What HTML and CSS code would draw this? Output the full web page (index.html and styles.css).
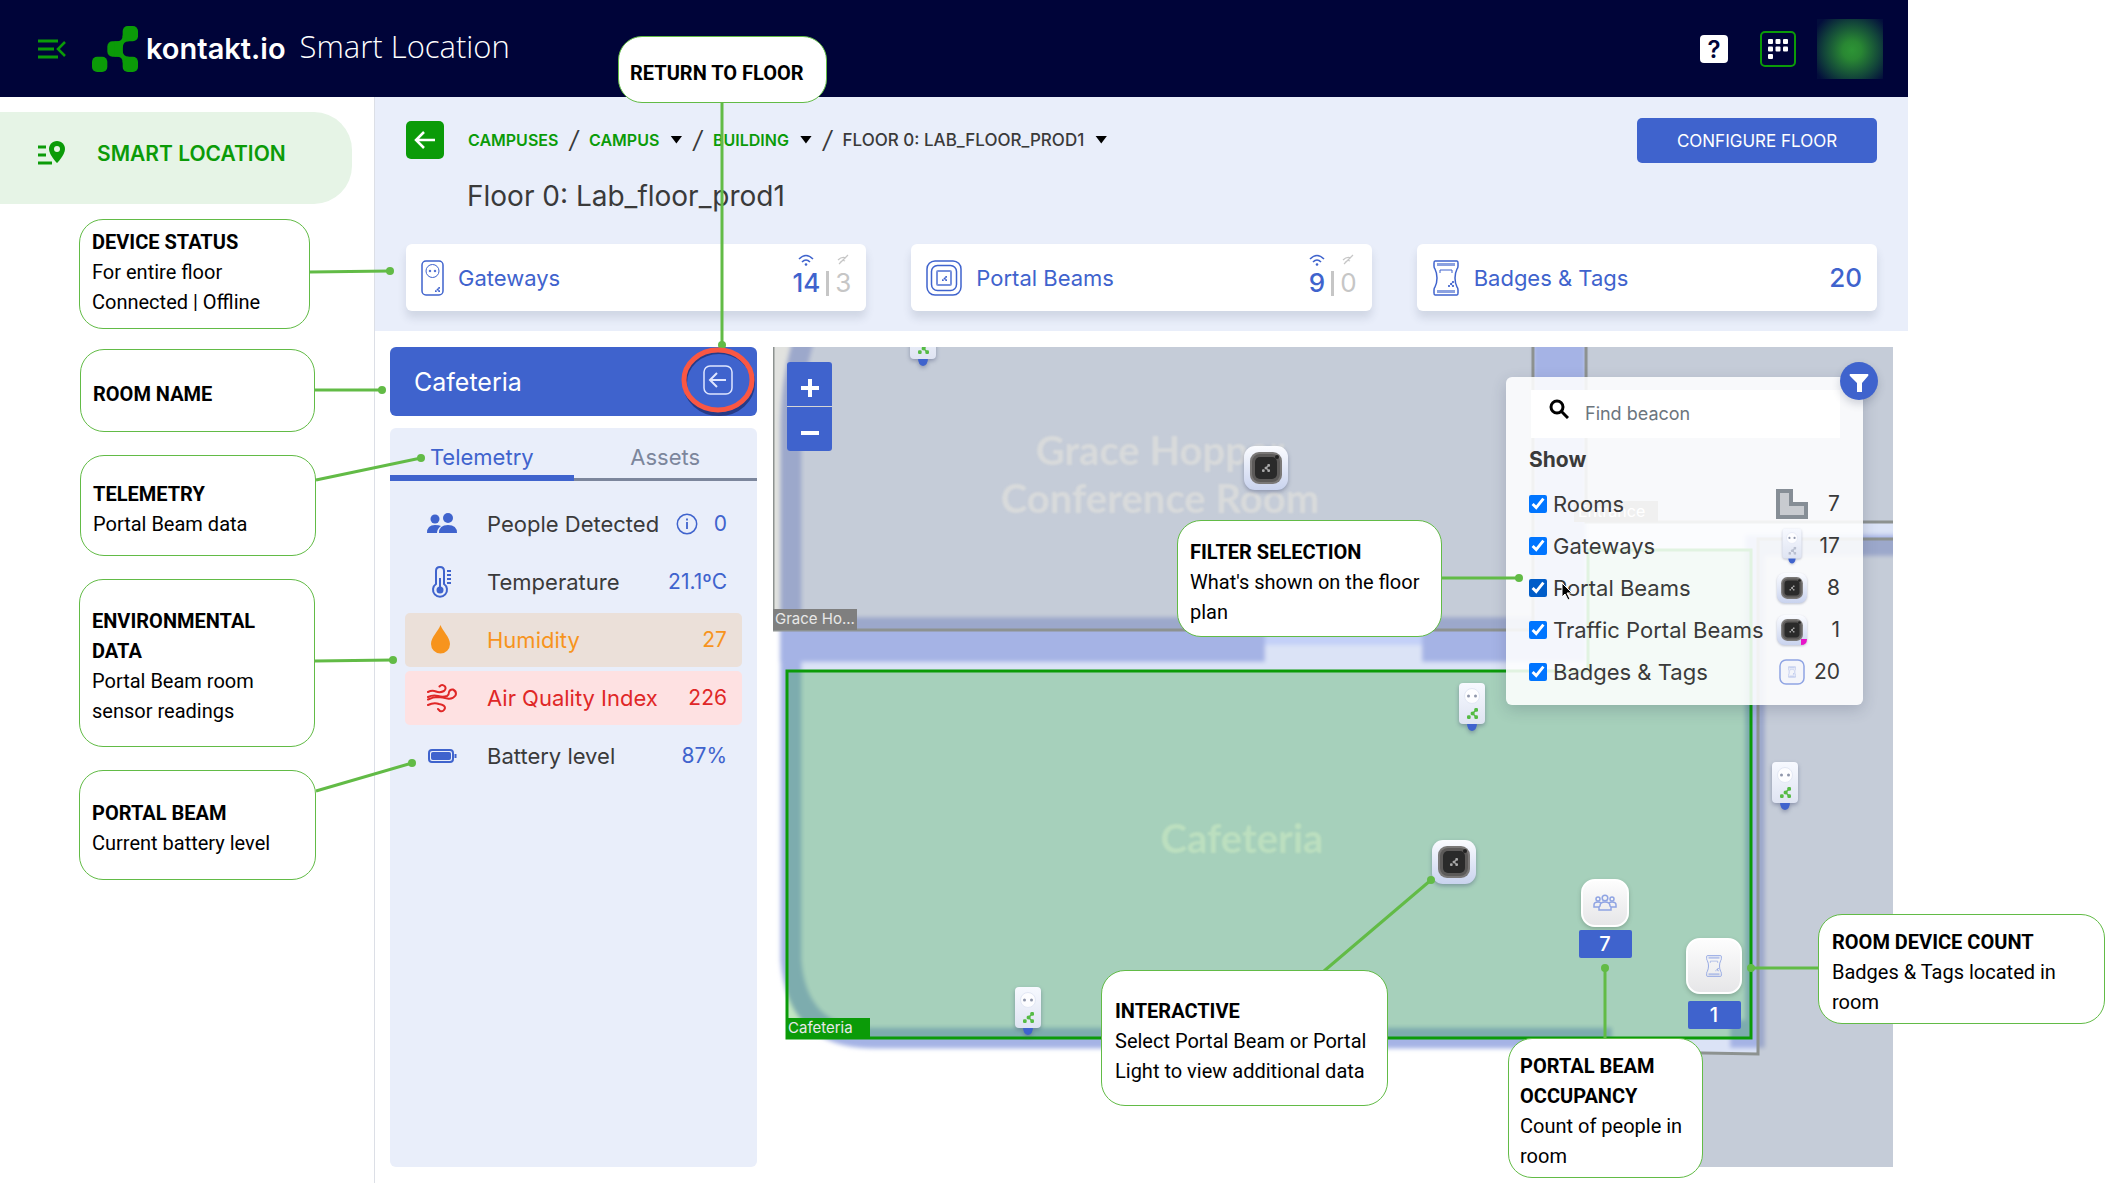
FILE: index.html
```html
<!DOCTYPE html>
<html lang="en">
<head>
<meta charset="utf-8">
<title>Kontakt.io Smart Location</title>
<link rel="stylesheet" href="styles.css">
</head>
<body>
<svg class="defs" aria-hidden="true">
  <defs>
    <linearGradient id="g-shell" x1="0" y1="0" x2="0" y2="1"><stop offset="0" stop-color="#fbfcff"/><stop offset="1" stop-color="#c9d3ee"/></linearGradient>
    <linearGradient id="g-gate" x1="0" y1="0" x2="0" y2="1"><stop offset="0" stop-color="#f7f9ff"/><stop offset="1" stop-color="#dfe4f2"/></linearGradient>
    <symbol id="mark" viewBox="0 0 45 45">
      <rect x="30" y="0" width="15" height="15" rx="5"/><rect x="15" y="15" width="15" height="15" rx="5"/><rect x="0" y="30" width="15" height="15" rx="5"/><rect x="30" y="30" width="15" height="15" rx="5"/>
      <path d="M22 15Q30 16 30 9L36 15Q30 15 30 22V24Q30 30 36 30L30 36Q30 29 22 30Z"/>
    </symbol>
    <symbol id="gateway" viewBox="0 0 32 52">
      <path d="M11 42h10q0 7-5 8q-5-1-5-8z" fill="#3f63cd"/>
      <rect x="3" y="2" width="26" height="41" rx="4" fill="url(#g-gate)"/>
      <circle cx="16" cy="15" r="7.500" fill="#fdfdff" stroke="#e3e8f5"/>
      <circle cx="12.500" cy="15" r="1.500" fill="#8f96ab"/><circle cx="19.500" cy="15" r="1.500" fill="#8f96ab"/>
      <use href="#mark" x="11" y="27" width="11" height="11"/>
    </symbol>
    <symbol id="beam" viewBox="0 0 44 44">
      <rect width="44" height="44" rx="11" fill="url(#g-shell)"/>
      <rect x="6" y="6" width="32" height="32" rx="9" fill="#7a7877"/>
      <rect x="8" y="8" width="28" height="28" rx="8" fill="#5c5a59"/>
      <rect x="11" y="11" width="22" height="22" rx="5" fill="#2a2a2a"/>
      <circle cx="33" cy="11" r="2" fill="#222"/>
      <use href="#mark" x="18" y="18" width="8" height="8" fill="#a9a9a9"/>
    </symbol>
    <symbol id="badge" viewBox="0 0 26 36">
      <path d="M2 1h22q1 0 1 2v3q0 2-1 3q-2 4-2 9t2 9q1 1 1 3v3q0 2-1 2H2q-1 0-1-2v-3q0-2 1-3q2-4 2-9t-2-9q-1-1-1-3V3q0-2 1-2z" fill="none" stroke="currentColor" stroke-width="1.500"/>
      <path d="M4 4.500h18M4 31.500h18" stroke="currentColor" stroke-width="3" opacity=".6"/>
      <path d="M7 13v-3h12v3" fill="none" stroke="currentColor"/>
      <use href="#mark" x="15" y="21" width="6" height="6" fill="currentColor"/>
    </symbol>
    <symbol id="wifi" viewBox="0 0 16 12">
      <path d="M1 5q7-7 14 0M4 8q4-4 8 0" fill="none" stroke="currentColor" stroke-width="1.600"/><circle cx="8" cy="10.500" r="1.300" fill="currentColor"/>
    </symbol>
    <symbol id="nowifi" viewBox="0 0 12 12">
      <path d="M1 6q4-4 8-2M3 8.500q3-3 5-1.500M11 1L2 10" fill="none" stroke="currentColor" stroke-width="1.200"/>
    </symbol>
  </defs>
</svg>

<div class="app">
  <header class="topbar">
    <button class="icon-btn menu" aria-label="Collapse menu">
      <svg width="30" height="20" viewBox="0 0 30 20" fill="none" stroke="#0b9b08" stroke-width="3"><path d="M1 2h20M1 10h16M1 18h20"/><path d="M28 3l-7 7 7 7" stroke-width="2.500"/></svg>
    </button>
    <svg class="logo" width="46" height="46" fill="#0b9b08"><use href="#mark"/></svg>
    <span class="brand">kontakt.io</span>
    <span class="product">Smart Location</span>
    <div class="tools">
      <button class="help" aria-label="Help">?</button>
      <button class="apps" aria-label="Applications">
        <svg width="20" height="20" viewBox="0 0 20 20" fill="#fff"><rect width="5" height="5" rx="1"/><rect x="7.500" width="5" height="5" rx="1"/><rect x="15" width="5" height="5" rx="1"/><rect y="7.500" width="5" height="5" rx="1"/><rect x="7.500" y="7.500" width="5" height="5" rx="1"/><rect x="15" y="7.500" width="5" height="5" rx="1"/><rect y="15" width="5" height="5" rx="1"/></svg>
      </button>
      <button class="avatar" aria-label="Account"></button>
    </div>
  </header>

  <div class="body">
    <nav class="sidebar">
      <a class="side-link" href="#">
        <svg width="28" height="26" viewBox="0 0 28 26"><path d="M0 6h8M0 14h8M0 22h14" stroke="#0b9b08" stroke-width="3"/><path d="M19 0c5 0 8 4 8 8 0 6-8 14-8 14S11 14 11 8c0-4 3-8 8-8z" fill="#0b9b08"/><circle cx="19" cy="8" r="3" fill="#e6f4e6"/></svg>
        <span>SMART LOCATION</span>
      </a>
    </nav>

    <main class="main">
      <section class="overview">
        <div class="crumb-row">
          <button class="back" aria-label="Back"><svg width="24" height="20" viewBox="0 0 24 20" fill="none" stroke="#fff" stroke-width="2.500"><path d="M22 10H3M11 2l-8 8 8 8"/></svg></button>
          <nav class="crumbs" aria-label="Breadcrumb">
            <a href="#">CAMPUSES</a><i>/</i>
            <a href="#">CAMPUS</a><button class="caret" aria-label="Choose campus"></button><i>/</i>
            <a href="#">BUILDING</a><button class="caret" aria-label="Choose building"></button><i>/</i>
            <span>FLOOR 0: LAB_FLOOR_PROD1</span><button class="caret" aria-label="Choose floor"></button>
          </nav>
          <button class="configure">CONFIGURE FLOOR</button>
        </div>
        <h1>Floor 0: Lab_floor_prod1</h1>
        <div class="cards">
          <article class="card">
            <svg width="23" height="36" viewBox="0 0 23 36" fill="none" stroke="#3f63cd"><rect x="1" y="1" width="21" height="34" rx="4" stroke-width="1.500"/><circle cx="11.500" cy="11" r="6.500"/><circle cx="9" cy="11" r=".8" fill="#3f63cd"/><circle cx="14" cy="11" r=".8" fill="#3f63cd"/><use href="#mark" x="14" y="27" width="5" height="5" fill="#3f63cd"/></svg>
            <h2>Gateways</h2>
            <div class="split">
              <span class="on"><svg width="16" height="12"><use href="#wifi"/></svg>14</span><b></b>
              <span class="off"><svg width="12" height="12"><use href="#nowifi"/></svg>3</span>
            </div>
          </article>
          <article class="card">
            <svg width="36" height="36" viewBox="0 0 36 36" fill="none" stroke="#3f63cd"><rect x="1" y="1" width="34" height="34" rx="8" stroke-width="1.500"/><rect x="5.500" y="5.500" width="25" height="25" rx="6" stroke-width="1.500"/><rect x="11" y="11" width="14" height="14" rx="1" stroke-width="2" opacity=".7"/><use href="#mark" x="16" y="16" width="5" height="5" fill="#3f63cd"/></svg>
            <h2>Portal Beams</h2>
            <div class="split">
              <span class="on"><svg width="16" height="12"><use href="#wifi"/></svg>9</span><b></b>
              <span class="off"><svg width="12" height="12"><use href="#nowifi"/></svg>0</span>
            </div>
          </article>
          <article class="card">
            <svg class="badge-icon" width="28" height="36"><use href="#badge"/></svg>
            <h2>Badges &amp; Tags</h2>
            <span class="total">20</span>
          </article>
        </div>
      </section>

      <section class="workspace">
        <div class="room">
          <header class="room-head">
            <h2>Cafeteria</h2>
            <button class="icon-btn" aria-label="Return to floor"><svg width="30" height="30" viewBox="0 0 30 30" fill="none" stroke="#dfe6ff"><rect x="1" y="1" width="28" height="28" rx="6" stroke-width="1.500"/><path d="M23 15H8M14 8l-7 7 7 7" stroke-width="2"/></svg></button>
          </header>
          <div class="details">
            <div class="tabs" role="tablist">
              <button class="tab tab-on" role="tab" aria-selected="true">Telemetry</button>
              <button class="tab" role="tab" aria-selected="false">Assets</button>
            </div>
            <dl class="readings">
              <div class="reading">
                <svg width="32" height="32" viewBox="0 0 32 32" fill="#3f63cd"><circle cx="9" cy="11" r="4.500"/><circle cx="22" cy="10" r="5"/><path d="M1 25q0-8 8-8 4 0 6 1-4 3-4 7zM13 25q0-8 9-8t9 8z"/></svg>
                <dt>People Detected</dt>
                <svg width="22" height="22" viewBox="0 0 22 22" fill="none" stroke="#3f63cd"><circle cx="11" cy="11" r="9.700" stroke-width="1.500"/><path d="M11 9v7M11 5.500v2" stroke-width="1.800"/></svg>
                <dd>0</dd>
              </div>
              <div class="reading">
                <svg width="32" height="32" viewBox="0 0 32 32" fill="none" stroke="#3f63cd" stroke-width="2"><path d="M10 18V5q0-4 4-4t4 4v13a7 7 0 1 1-8 0z"/><circle cx="14" cy="24" r="3.500" fill="#3f63cd" stroke="none"/><path d="M14 12v12M21 5h4M21 9h4M21 13h4M21 17h4"/></svg>
                <dt>Temperature</dt><dd>21.1ºC</dd>
              </div>
              <div class="reading warn">
                <svg width="32" height="32" viewBox="0 0 32 32" fill="#f7941d"><path d="M14.500 1c2 6 9.500 12 9.500 19a9.500 9.500 0 0 1-19 0c0-7 7.500-13 9.500-19z"/></svg>
                <dt>Humidity</dt><dd>27</dd>
              </div>
              <div class="reading alert">
                <svg width="32" height="32" viewBox="0 0 32 32" fill="none" stroke="#e02727" stroke-width="2" stroke-linecap="round"><path d="M2 10q4-2 8-.5t8-.5q2.500-2 1-4.500-3-3-5.500 0M2 15q5-2.500 10-1t9 0q2-1 2-4 1-3 4-2.500 4 2 2.500 6-3 4-8 3-5-1-9.500-1.500-5 0-10 2.500M2 23q6-3 11-1 6 1 6 4-1 4-5 3l-2-2"/></svg>
                <dt>Air Quality Index</dt><dd>226</dd>
              </div>
              <div class="reading">
                <svg width="32" height="32" viewBox="0 0 32 32" fill="none" stroke="#3f63cd"><rect x="3" y="10" width="24" height="12" rx="3" stroke-width="2"/><rect x="5.500" y="12.500" width="19" height="7" rx="1" fill="#3f63cd"/><path d="M29.500 14v4" stroke-width="2"/></svg>
                <dt>Battery level</dt><dd>87%</dd>
              </div>
            </dl>
          </div>
        </div>

        <div class="map">
          <svg class="plan" viewBox="773 347 1120 820" preserveAspectRatio="xMinYMin slice" aria-hidden="true">
            <defs>
              <filter id="soft" filterUnits="userSpaceOnUse" x="700" y="300" width="1300" height="1000"><feGaussianBlur stdDeviation="2"/></filter>
            </defs>
            <rect x="773" y="347" width="1120" height="820" fill="#fff"/>
            <g filter="url(#soft)">
              <path d="M812 300Q791 360 791 420V960Q795 1038 872 1038H1612V1054H1650V1250H2000V300z" fill="#dbe3f6"/>
              <path d="M816 310Q791 360 791 430V960Q797 1038 872 1038H1612" fill="none" stroke="#a5b3e5" stroke-width="21"/>
              <path d="M780 617H1540V662H1422V631H1265V662H780zM1533 300H1586V662H1533zM1745 535H2000V556H1765V1048H1730V1020H1745z" fill="#a5b3e5"/>
              <path d="M1265 631h157v14h-157z" fill="#c3d0f8"/>
            </g>
            <g fill="rgb(131,135,121)" fill-opacity=".24" stroke="#8d9290" stroke-width="3">
              <path d="M773 330H1533V630H773zM1586 330H1920V522H1586zM1758 539H1920V1200H1650V1052L1758 1054z"/>
            </g>
            <path d="M1588 550H1751V1038H787V671H1588z" fill="#009600" fill-opacity=".24" stroke="#0b9b08" stroke-width="3"/>
            <rect x="1574" y="501" width="84" height="21" fill="#808080"/>
            <text x="1578" y="517" class="room-tag">Entrance</text>
            <g class="plan-name">
              <text x="1160" y="465">Grace Hopper</text>
              <text x="1160" y="513">Conference Room</text>
              <text x="1242" y="853" class="plan-cafe">Cafeteria</text>
            </g>
          </svg>
          <span class="tag tag-grace">Grace Ho...</span>
          <span class="tag tag-cafe">Cafeteria</span>

          <svg class="pin gw gw1"><use href="#gateway"/></svg>
          <svg class="pin gw gw2"><use href="#gateway"/></svg>
          <svg class="pin gw gw3"><use href="#gateway"/></svg>
          <svg class="pin gw gw4"><use href="#gateway"/></svg>
          <svg class="pin pb pb1"><use href="#beam"/></svg>
          <svg class="pin pb pb2"><use href="#beam"/></svg>
          <div class="count people">
            <span class="tile"><svg width="24" height="18" viewBox="0 0 24 18" fill="none" stroke="#8fa4e3" stroke-width="1.500"><circle cx="12" cy="4" r="2.800"/><circle cx="5" cy="5" r="2"/><circle cx="19" cy="5" r="2"/><path d="M7 12q0-4 5-4t5 4l1 1v3H6v-3zM6 13H1v-2q0-3 4-3 2 0 3 1M18 13h5v-2q0-3-4-3-2 0-3 1"/></svg></span>
            <b>7</b>
          </div>
          <div class="count devices">
            <span class="tile"><svg width="16" height="22"><use href="#badge"/></svg></span>
            <b>1</b>
          </div>

          <div class="zoom"><button aria-label="Zoom in"><svg width="20" height="20"><path d="M10 1v18M1 10h18" stroke="#fff" stroke-width="4"/></svg></button><button aria-label="Zoom out"><svg width="20" height="20"><path d="M1 10h18" stroke="#fff" stroke-width="4"/></svg></button></div>

          <form class="filter">
            <div class="search">
              <svg width="20" height="20" viewBox="0 0 20 20" fill="none" stroke="#000" stroke-width="3"><circle cx="8" cy="8" r="6"/><path d="M12 12l7 7"/></svg>
              <input type="text" placeholder="Find beacon" aria-label="Find beacon">
            </div>
            <fieldset>
              <legend>Show</legend>
              <div class="option"><input type="checkbox" id="f1" checked><label for="f1">Rooms</label><svg width="32" height="30"><path d="M2 2h13v13h15v13H2z" fill="#c8cbd0" stroke="#868e96" stroke-width="4"/></svg><output>7</output></div>
              <div class="option"><input type="checkbox" id="f2" checked><label for="f2">Gateways</label><svg class="mini" width="32" height="38"><use href="#gateway"/></svg><output>17</output></div>
              <div class="option"><input type="checkbox" id="f3" class="hovered" checked><label for="f3">Portal Beams</label><svg class="mini" width="30" height="30"><use href="#beam"/></svg><output>8</output></div>
              <div class="option"><input type="checkbox" id="f4" checked><label for="f4">Traffic Portal Beams</label><svg class="mini" width="30" height="30"><use href="#beam"/><path d="M24 24h6q0 6-6 6z" fill="#e815c8"/></svg><output>1</output></div>
              <div class="option"><input type="checkbox" id="f5" checked><label for="f5">Badges &amp; Tags</label><svg class="badge-mini" width="26" height="26"><rect x="1" y="1" width="24" height="24" rx="6" fill="#f4f5fa" stroke="#8fa4e3" stroke-width="1.500"/><use href="#badge" x="9" y="7" width="8" height="12"/></svg><output>20</output></div>
            </fieldset>
          </form>
          <button class="funnel" aria-label="Toggle filter"><svg width="20" height="20" fill="#fff"><path d="M1 1h18q1 1 0 2l-6 7v9H8v-9L1 3q-1-1 0-2z"/></svg></button>
          <svg class="pointer" width="12" height="19" viewBox="0 0 12 19"><path d="M1 1v14l3-3 3 6 2-1-3-6h5z" fill="#000" stroke="#fff"/></svg>
        </div>
      </section>
    </main>
  </div>
</div>

<div class="notes">
  <svg class="leaders" aria-hidden="true">
    <g stroke="#62bb46" stroke-width="3" fill="none">
      <path d="M722 103V345M310 272L390 271M315 390H382M316 480L421 458M315 661L393 660M316 791L412 763M1442 578H1519M1324 971L1431 880M1605 968V1040M1819 968H1751"/>
    </g>
    <g fill="#62bb46"><circle cx="722" cy="345" r="4"/><circle cx="390" cy="271" r="4"/><circle cx="382" cy="390" r="4"/><circle cx="421" cy="458" r="4"/><circle cx="393" cy="660" r="4"/><circle cx="412" cy="763" r="4"/><circle cx="1519" cy="578" r="4"/><circle cx="1431" cy="880" r="4"/><circle cx="1605" cy="968" r="4"/><circle cx="1751" cy="968" r="4"/></g>
    <ellipse cx="719" cy="383" rx="34" ry="31" fill="none" stroke="#14225a" stroke-width="4" opacity=".6"/>
    <ellipse cx="718" cy="380" rx="34" ry="30" fill="none" stroke="#fa5743" stroke-width="5"/>
  </svg>
  <aside class="note n-return"><strong>RETURN TO FLOOR</strong></aside>
  <aside class="note n-status"><strong>DEVICE STATUS</strong><p>For entire floor<br>Connected | Offline</p></aside>
  <aside class="note n-room"><strong>ROOM NAME</strong></aside>
  <aside class="note n-telemetry"><strong>TELEMETRY</strong><p>Portal Beam data</p></aside>
  <aside class="note n-env"><strong>ENVIRONMENTAL DATA</strong><p>Portal Beam room sensor readings</p></aside>
  <aside class="note n-battery"><strong>PORTAL BEAM</strong><p>Current battery level</p></aside>
  <aside class="note n-filter"><strong>FILTER SELECTION</strong><p>What's shown on the floor plan</p></aside>
  <aside class="note n-interactive"><strong>INTERACTIVE</strong><p>Select Portal Beam or Portal Light to view additional data</p></aside>
  <aside class="note n-occupancy"><strong>PORTAL BEAM OCCUPANCY</strong><p>Count of people in room</p></aside>
  <aside class="note n-devices"><strong>ROOM DEVICE COUNT</strong><p>Badges &amp; Tags located in room</p></aside>
</div>
</body>
</html>
```
FILE: styles.css
```css
:root {
  --blue: #3f63cd;
  --green: #0b9b08;
  --pale: #e9eefa;
  --ink: #3a3a3a;
}
* { box-sizing: border-box; }
body {
  margin: 0;
  position: relative;
  min-height: 100vh;
  background: #fff;
  color: var(--ink);
  font: 22px/30px Inter, "Open Sans", sans-serif;
}
button { font: inherit; border: 0; padding: 0; cursor: pointer; display: grid; place-items: center; }
h1, h2, p, dl, dd { margin: 0; font-weight: 400; }
a { color: var(--green); text-decoration: none; }
svg { display: block; flex: none; }
.defs { position: absolute; width: 0; height: 0; }
.icon-btn { background: none; }

.app { display: flex; flex-direction: column; min-height: 100vh; margin-right: 198px; }

/* Top bar */
.topbar { display: flex; align-items: center; height: 97px; padding: 0 25px 0 37px; background: #000439; color: #fff; }
.logo { margin: 0 8px 0 25px; }
.brand { font-size: 29px; font-weight: 600; }
.product { margin: 0 0 6px 14px; font: 300 31px/36px "Open Sans", sans-serif; }
.tools { display: flex; align-items: center; gap: 32px; margin-left: auto; }
.help { width: 28px; height: 28px; border-radius: 4px; background: #fff; color: #000439; font-size: 24px; font-weight: 600; }
.apps { width: 36px; height: 36px; border: 2px solid var(--green); border-radius: 5px; background: none; }
.avatar { width: 66px; height: 60px; margin-left: -11px; background: radial-gradient(circle at 53% 52%, #2d9435 0, #298733 20%, #12443a 60%, #030d3c 90%); }

/* Side navigation */
.body { display: flex; flex: 1; }
.sidebar { width: 375px; flex: none; padding: 15px 22px 0 0; border-right: 1px solid #dcdfe6; }
.side-link { display: flex; align-items: center; gap: 31px; height: 92px; padding: 0 0 8px 38px; border-radius: 0 38px 38px 0; background: #e6f4e6; font-size: 21px; font-weight: 600; }

/* Floor overview */
.main { display: flex; flex-direction: column; flex: 1; min-width: 0; }
.overview { padding: 21px 31px 20px; background: var(--pale); }
.crumb-row { display: flex; align-items: center; height: 45px; }
.back { width: 38px; height: 38px; margin: 0 24px 2px 0; border-radius: 5px; background: var(--green); }
.crumbs { display: flex; align-items: center; gap: 11px; padding-bottom: 2px; font-size: 16px; font-weight: 600; }
.crumbs span { font-size: 17px; font-weight: 500; }
.crumbs i { font-size: 24px; font-weight: 400; }
.caret { width: 12px; height: 8px; background: #000; clip-path: polygon(0 0, 100% 0, 50% 100%); }
.configure { width: 240px; height: 45px; margin-left: auto; border-radius: 5px; background: var(--blue); color: #fff; font-size: 17px; }
.overview h1 { margin: 15px 0 29px 61px; font-size: 28px; line-height: 37px; }
.cards { display: grid; grid-template-columns: repeat(3, 1fr); gap: 45px; }
.card { display: flex; align-items: center; gap: 14px; height: 67px; padding: 0 15px; border-radius: 6px; background: #fff; color: var(--blue); box-shadow: 0 7px 9px rgba(60, 70, 100, .14); }
.card h2 { margin-right: auto; font-size: 22px; }
.total { font-size: 26px; font-weight: 500; }
.split { display: flex; align-items: end; gap: 6px; padding-bottom: 4px; font-size: 26px; }
.split span { display: grid; justify-items: center; gap: 2px; }
.split b { width: 3px; height: 25px; margin-bottom: 2px; background: #c6c6c6; }
.on { font-weight: 500; }
.off { color: #c6c6c6; }

/* Room column */
.workspace { display: grid; grid-template-columns: 367px 1fr; gap: 16px; flex: 1; padding: 16px 15px; }
.room { display: flex; flex-direction: column; gap: 12px; }
.room-head { display: flex; align-items: center; justify-content: space-between; height: 69px; padding: 0 24px; border-radius: 6px; background: var(--blue); color: #fff; }
.room-head h2 { font-size: 25px; }
.room-head button { margin-bottom: 3px; }
.details { flex: 1; border-radius: 6px; background: var(--pale); }
.tabs { display: grid; grid-template-columns: 1fr 1fr; height: 53px; }
.tab { padding-top: 8px; background: none; border-bottom: 3px solid #7c869c; color: #7c869c; font-size: 22px; }
.tab-on { border-bottom: 6px solid var(--blue); color: var(--blue); padding-top: 11px; }
.readings { display: grid; gap: 4px; padding: 16px 15px; }
.reading { display: flex; align-items: center; height: 54px; padding: 0 15px 0 21px; border-radius: 5px; }
.reading dt { margin: 0 auto 0 29px; }
.reading dd { margin-left: 16px; color: var(--blue); font-size: 21px; }
.warn { background: #ebe0d9; }
.warn dt, .warn dd { color: #f7941d; }
.alert { background: #fee1e2; }
.alert dt, .alert dd { color: #e02727; }

/* Floor plan */
.map { position: relative; overflow: hidden; min-height: 820px; }
.plan { position: absolute; inset: 0; width: 100%; height: 100%; }
.plan-name { font: 700 40px Lato, sans-serif; text-anchor: middle; fill: #d8dadb; filter: blur(1px); }
.plan-cafe { fill: #bcdfbf; }
.room-tag { font-size: 16px; fill: #fff; }
.tag { position: absolute; width: 84px; height: 21px; padding-left: 2px; background: #7f7f7f; color: #e8e8e8; font-size: 15px; line-height: 20px; white-space: nowrap; }
.tag-grace { left: 0; top: 262px; }
.tag-cafe { left: 13px; top: 671px; background: var(--green); }
.pin { position: absolute; filter: drop-shadow(0 2px 2px rgba(60, 70, 110, .4)); }
.gw { width: 32px; height: 52px; fill: #55bb44; }
.gw1 { left: 134px; top: -31px; }
.gw2 { left: 683px; top: 334px; }
.gw3 { left: 996px; top: 413px; }
.gw4 { left: 239px; top: 638px; }
.pb { width: 44px; height: 44px; }
.pb1 { left: 471px; top: 99px; }
.pb2 { left: 659px; top: 493px; }
.count { position: absolute; display: grid; justify-items: center; width: 54px; }
.count b { width: 53px; height: 28px; border-radius: 2px; background: var(--blue); color: #fff; font-size: 20px; font-weight: 500; line-height: 28px; text-align: center; }
.tile { display: grid; place-items: center; width: 48px; height: 48px; border: 2px solid #fff; border-radius: 14px; background: linear-gradient(#fdfdfd, #e6e6e8); color: #8fa4e3; box-shadow: 0 2px 4px rgba(60, 80, 70, .3); }
.people { left: 805px; top: 532px; gap: 3px; }
.devices { left: 913px; top: 591px; gap: 7px; }
.devices .tile { width: 56px; height: 56px; }
.zoom { position: absolute; left: 14px; top: 15px; display: grid; gap: 1px; width: 45px; border-radius: 3px; overflow: hidden; background: #d5d5d5; }
.zoom button { height: 44px; background: var(--blue); padding-top: 8px; }

/* Beacon filter */
.filter { position: absolute; right: 30px; top: 30px; width: 357px; height: 328px; padding: 13px 23px; border-radius: 6px; background: rgba(255, 255, 255, .88); box-shadow: 0 5px 15px rgba(40, 50, 80, .2); }
.search { display: flex; align-items: center; gap: 16px; height: 48px; padding: 0 18px; background: #fff; margin-left: 2px; }
.search svg { margin-bottom: 10px; }
.search input { width: 100%; border: 0; outline: 0; padding: 0; background: none; font: 18px/30px Inter, sans-serif; }
.search input::placeholder { color: #6c757d; opacity: 1; }
fieldset { margin: 7px 0 0; padding: 0; border: 0; }
legend { padding: 0; font-size: 21px; font-weight: 700; line-height: 30px; }
.option { display: grid; grid-template-columns: 18px 1fr 32px 32px; align-items: center; height: 42px; }
.option:first-of-type { margin-top: 8px; }
.option input { width: 18px; height: 18px; margin: 0; accent-color: #0075ff; }
.option .hovered { accent-color: #005cc8; }
.option label { padding-left: 6px; font-size: 22px; white-space: nowrap; }
.option svg { justify-self: center; }
.option output { text-align: right; font-size: 21px; }
.mini { filter: drop-shadow(0 1px 1px rgba(60, 70, 110, .3)); fill: #b9bfd0; }
.badge-mini { color: #8fa4e3; }
.funnel { position: absolute; right: 15px; top: 15px; width: 38px; height: 38px; padding-top: 3px; border-radius: 50%; background: var(--blue); box-shadow: 0 4px 8px rgba(40, 50, 80, .2); }
.pointer { position: absolute; right: 320px; top: 235px; }

/* Annotations laid over the screen */
.notes { position: absolute; inset: 0; pointer-events: none; overflow: hidden; color: #000; font: 20px/30px Roboto, sans-serif; }
.leaders { position: absolute; inset: 0; width: 100%; height: 100%; }
.note { position: absolute; padding: 0 12px; border: 1px solid #62bb46; border-radius: 24px; background: #fff; }
.note strong { display: block; font-weight: 700; }
.n-return { left: 618px; top: 36px; width: 209px; height: 67px; padding: 21px 11px; }
.n-status { left: 79px; top: 219px; width: 231px; height: 110px; padding-top: 7px; }
.n-room { left: 80px; top: 349px; width: 235px; height: 83px; padding-top: 29px; }
.n-telemetry { left: 80px; top: 455px; width: 236px; height: 101px; padding-top: 23px; }
.n-env { left: 79px; top: 579px; width: 236px; height: 168px; padding-top: 26px; }
.n-battery { left: 79px; top: 770px; width: 237px; height: 110px; padding-top: 27px; }
.n-filter { left: 1177px; top: 520px; width: 265px; height: 117px; padding-top: 16px; }
.n-interactive { left: 1101px; top: 970px; width: 287px; height: 136px; padding: 25px 13px; }
.n-occupancy { left: 1508px; top: 1038px; width: 195px; height: 140px; padding: 12px 11px; }
.n-devices { left: 1818px; top: 914px; width: 287px; height: 110px; padding: 12px 13px; }
```
